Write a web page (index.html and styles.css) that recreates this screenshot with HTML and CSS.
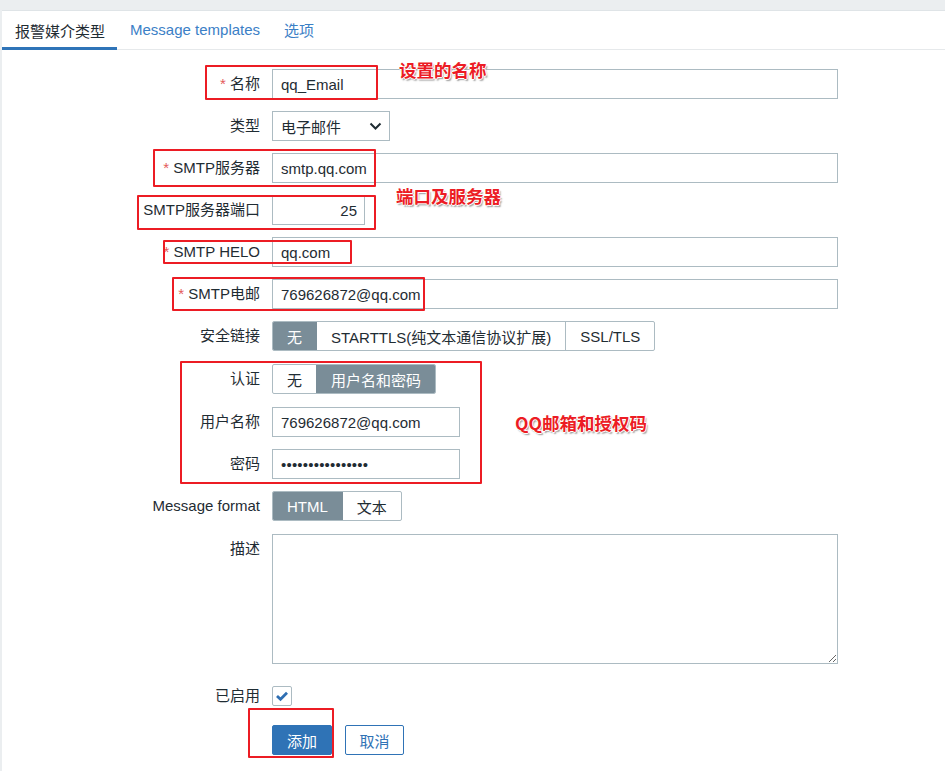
FILE: index.html
```html
<!DOCTYPE html>
<html lang="zh">
<head>
<meta charset="utf-8">
<title>报警媒介类型</title>
<link rel="stylesheet" href="styles.css">
</head>
<body>
<div class="panel">
  <div class="tabs">
    <div class="tab active">报警媒介类型</div>
    <div class="tab link">Message templates</div>
    <div class="tab link last">选项</div>
  </div>
  <form class="form">
    <div class="row"><label class="lbl"><span class="req">*</span> 名称</label><input class="inp wide" type="text" value="qq_Email"></div>
    <div class="row"><label class="lbl">类型</label>
      <div class="select"><span>电子邮件</span>
        <svg class="chev" width="13" height="8" viewBox="0 0 13 8"><path d="M1.5 1.5 L6.5 6.5 L11.5 1.5" fill="none" stroke="#1f2c33" stroke-width="2"/></svg>
      </div>
    </div>
    <div class="row"><label class="lbl"><span class="req">*</span> SMTP服务器</label><input class="inp wide" type="text" value="smtp.qq.com"></div>
    <div class="row"><label class="lbl">SMTP服务器端口</label><input class="inp port" type="text" value="25"></div>
    <div class="row"><label class="lbl"><span class="req">*</span> SMTP HELO</label><input class="inp wide" type="text" value="qq.com"></div>
    <div class="row"><label class="lbl"><span class="req">*</span> SMTP电邮</label><input class="inp wide" type="text" value="769626872@qq.com"></div>
    <div class="row g13"><label class="lbl">安全链接</label>
      <div class="seg"><span class="on">无</span><span>STARTTLS(纯文本通信协议扩展)</span><span>SSL/TLS</span></div>
    </div>
    <div class="row g13"><label class="lbl">认证</label>
      <div class="seg"><span>无</span><span class="on">用户名和密码</span></div>
    </div>
    <div class="row"><label class="lbl">用户名称</label><input class="inp mid" type="text" value="769626872@qq.com"></div>
    <div class="row"><label class="lbl">密码</label><input class="inp mid pw" type="password" value="abcdefghijklmnop"></div>
    <div class="row g13"><label class="lbl">Message format</label>
      <div class="seg"><span class="on fmt">HTML</span><span class="fmt2">文本</span></div>
    </div>
    <div class="row top"><label class="lbl">描述</label><textarea class="area"></textarea></div>
    <div class="row enabled"><label class="lbl">已启用</label>
      <span class="check"><svg width="18" height="18" viewBox="0 0 18 18"><path d="M4 9 L7.5 12.3 L14 5.8" fill="none" stroke="#2f6fb3" stroke-width="2.8"/></svg></span>
    </div>
    <div class="row btns"><span class="lbl"></span><button type="button" class="btn primary">添加</button><button type="button" class="btn outline">取消</button></div>
  </form>
</div>

<div class="mark m1"></div>
<div class="mark m2"></div>
<div class="mark m3"></div>
<div class="mark m4"></div>
<div class="mark m5"></div>
<div class="mark m6"></div>
<div class="mark m7"></div>
<div class="note n1">设置的名称</div>
<div class="note n2">端口及服务器</div>
<div class="note n3">QQ邮箱和授权码</div>
</body>
</html>
```
FILE: styles.css
```css
html, body {
  margin: 0;
  padding: 0;
}
body {
  background: #ebeef0;
  font-family: "Liberation Sans", "Noto Sans CJK SC", sans-serif;
  font-size: 15px;
  color: #1f2c33;
  position: relative;
  height: 771px;
  overflow: hidden;
}
.panel {
  margin: 10px 0 0 2px;
  border-top: 1px solid #dfe4e7;
  background: #fff;
  height: 760px;
}
.tabs {
  display: flex;
  height: 38px;
  border-bottom: 1px solid #e6e9eb;
}
.tab {
  display: flex;
  align-items: center;
  padding: 0 13px 1px 13px;
  height: 38px;
  box-sizing: border-box;
  white-space: nowrap;
}
.tab.active {
  color: #1f2c33;
  box-shadow: inset 0 -3px 0 #2f74b8;
  height: 39px;
  margin-bottom: -1px;
  padding-right: 12px;
}
.tab.link {
  color: #3b80c6;
  padding-left: 13px;
  padding-right: 13px;
}
.tab.last { padding-left: 11px; }
.form {
  display: flex;
  flex-direction: column;
  padding-top: 19px;
}
.row {
  display: flex;
  align-items: center;
  margin-bottom: 12px;
  min-height: 30px;
}
.row.g13 { margin-bottom: 13px; }
.row.top { align-items: flex-start; margin-bottom: 17px; }
.row.enabled { height: 30px; margin-bottom: 14px; }
.lbl {
  width: 258px;
  margin-right: 12px;
  text-align: right;
  white-space: nowrap;
  line-height: 30px;
  flex: none;
}
.req { color: #e45959; }
.inp {
  height: 30px;
  box-sizing: border-box;
  border: 1px solid #acbbc2;
  border-radius: 0;
  padding: 0 8px;
  font-family: "Liberation Sans", "Noto Sans CJK SC", sans-serif;
  font-size: 15px;
  color: #1f2c33;
  background: #fff;
  outline: none;
}
.wide { width: 566px; }
.port { width: 93px; text-align: right; padding-right: 7px; }
.mid { width: 188px; }
.pw { font-size: 15px; letter-spacing: 0.2px; }
.select {
  width: 118px;
  height: 30px;
  box-sizing: border-box;
  border: 1px solid #acbbc2;
  display: flex;
  align-items: center;
  justify-content: space-between;
  padding: 0 7px 0 8px;
}
.seg {
  display: flex;
  height: 30px;
  border: 1px solid #acbbc2;
  border-radius: 2px;
  box-sizing: border-box;
  overflow: hidden;
}
.seg span {
  display: flex;
  align-items: center;
  padding: 0 14px;
  border-left: 1px solid #acbbc2;
  white-space: nowrap;
}
.seg span:first-child { border-left: none; }
.seg span.on {
  background: #7a8d98;
  color: #fff;
  border-color: #7a8d98;
}
.seg span.on + span { border-left-color: #7a8d98; }
.seg .fmt { padding: 0 14px 0 14px; }
.seg .fmt2 { padding: 0 14px; }
.area {
  width: 566px;
  height: 130px;
  box-sizing: border-box;
  border: 1px solid #acbbc2;
  margin: 0;
  padding: 6px 8px;
  font-family: "Liberation Sans", "Noto Sans CJK SC", sans-serif;
  font-size: 15px;
  outline: none;
  display: block;
}
.check {
  width: 20px;
  height: 20px;
  box-sizing: border-box;
  border: 1px solid #acbbc2;
  border-radius: 2px;
  display: flex;
  align-items: center;
  justify-content: center;
}
.btns { margin-bottom: 0; }
.btns .lbl { line-height: 30px; }
.btn {
  height: 30px;
  box-sizing: border-box;
  font-family: "Liberation Sans", "Noto Sans CJK SC", sans-serif;
  font-size: 15px;
  border-radius: 2px;
  padding: 0;
  margin: 0 13px 0 0;
  cursor: pointer;
}
.btn.primary {
  width: 60px;
  background: #2f73b6;
  border: 1px solid #2f73b6;
  color: #fff;
}
.btn.outline {
  width: 59px;
  background: #fff;
  border: 1px solid #2f73b6;
  color: #2f73b6;
}
.mark {
  position: absolute;
  border: 2px solid #ec1c24;
  box-sizing: border-box;
  border-radius: 1px;
}
.m1 { left: 205px; top: 65px; width: 173px; height: 35px; }
.m2 { left: 153px; top: 149px; width: 223px; height: 38px; }
.m3 { left: 137px; top: 195px; width: 239px; height: 35px; }
.m4 { left: 163px; top: 240px; width: 189px; height: 24px; }
.m5 { left: 172px; top: 277px; width: 253px; height: 34px; }
.m6 { left: 180px; top: 361px; width: 302px; height: 123px; }
.m7 { left: 248px; top: 708px; width: 86px; height: 50px; }
.note {
  position: absolute;
  color: #ec1c24;
  font-family: "Noto Sans CJK SC", sans-serif;
  font-weight: 700;
  font-size: 17.5px;
  line-height: 20px;
  white-space: nowrap;
  text-shadow: 1px 0 0 #fff, -1px 0 0 #fff, 0 1px 0 #fff, 0 -1px 0 #fff, 1.5px 1.5px 1.5px #9a9a9a;
}
.n1 { left: 399px; top: 60px; }
.n2 { left: 396px; top: 186px; }
.n3 { left: 515px; top: 413px; }
```
